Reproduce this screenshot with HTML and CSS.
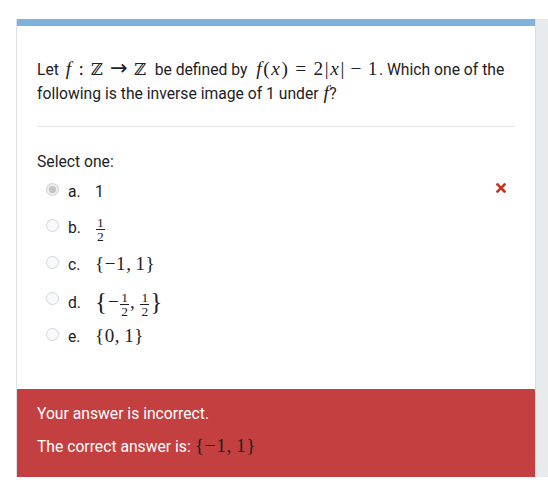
FILE: index.html
```html
<!DOCTYPE html>
<html>
<head>
<meta charset="utf-8">
<link rel="stylesheet" href="styles.css">
</head>
<body>
<div class="page">
  <div class="card">
    <div class="bar"></div>
    <div class="content">
      <div class="qtext">Let <span class="m qm qm-first"><i>f</i><span class="rel">:</span><span class="bb">ℤ</span><span class="rel arr">→</span><span class="bb">ℤ</span></span> be defined by <span class="m qm qm-mid"><i>f</i>(<i>x</i>)<span class="rel">=</span>2|<i>x</i>|<span class="bin">−</span>1</span>. Which one of the following is the inverse image of 1 under <span class="m qm qm-end"><i>f</i></span>?</div>
      <div class="sep"></div>
      <div class="prompt">Select one:</div>
      <div class="answers">
        <div class="opt">
          <span class="radio checked"></span><span class="lbl">a.</span><span class="val">1</span>
          <svg class="cross" width="10" height="10" viewBox="0 0 10 10"><path d="M1.5 1.5L8.5 8.5M8.5 1.5L1.5 8.5" stroke="#ca3120" stroke-width="2.6" stroke-linecap="square"/></svg>
        </div>
        <div class="opt">
          <span class="radio"></span><span class="lbl">b.</span><span class="val"><span class="frac"><span class="num">1</span><span class="den">2</span></span></span>
        </div>
        <div class="opt">
          <span class="radio"></span><span class="lbl">c.</span><span class="val m">{−1,<span class="sp"></span>1}</span>
        </div>
        <div class="opt">
          <span class="radio"></span><span class="lbl">d.</span><span class="val m"><span class="big">{</span>−<span class="frac"><span class="num">1</span><span class="den">2</span></span>,<span class="sp"></span><span class="frac"><span class="num">1</span><span class="den">2</span></span><span class="big">}</span></span>
        </div>
        <div class="opt">
          <span class="radio"></span><span class="lbl">e.</span><span class="val m">{0,<span class="sp"></span>1}</span>
        </div>
      </div>
    </div>
    <div class="feedback">
      <p class="fb1">Your answer is incorrect.</p>
      <p class="fb2">The correct answer is: <span class="m">{−1,<span class="sp"></span>1}</span></p>
    </div>
  </div>
  <div class="side"></div>
</div>
</body>
</html>
```
FILE: styles.css
```css
html, body {
  margin: 0;
  padding: 0;
  background: #ffffff;
}
body {
  font-family: Roboto, "Liberation Sans", sans-serif;
  font-size: 15.7px;
  color: #1d2125;
}
.page {
  display: flex;
  align-items: stretch;
  padding: 19px 0 0 16px;
}
.card {
  width: 519px;
  box-sizing: border-box;
  border-left: 1px solid #dee2e6;
  background: #fff;
  display: flex;
  flex-direction: column;
}
.bar {
  height: 7px;
  background: #7fb3dc;
}
.content {
  padding: 32px 20px 0 20px;
  height: 363px;
  box-sizing: border-box;
}
.qtext {
  line-height: 24px;
}
.m {
  font-family: "Liberation Serif", "DejaVu Serif", serif;
  font-size: 18.5px;
  line-height: 1;
  white-space: nowrap;
  letter-spacing: 0.6px;
}
.qm {
  font-size: 19.3px;
  letter-spacing: 1.5px;
}
.qm-first {
  margin: 0 3px 0 3px;
}
.qm-mid {
  margin: 0 0 0 5px;
  letter-spacing: 1.6px;
}
.qm-end {
  margin: 0 0 0 1px;
  letter-spacing: 0.5px;
}
.m i {
  font-style: italic;
}
.bb {
  font-family: "DejaVu Serif", serif;
  font-size: 16.5px;
  line-height: 1;
}
.rel {
  margin: 0 0.3em;
}
.arr {
  font-family: "DejaVu Sans", sans-serif;
  font-size: 21px;
  line-height: 1;
  margin: 0 0.25em;
}
.bin {
  margin: 0 0.24em;
}
.sp {
  display: inline-block;
  width: 4px;
}
.sep {
  height: 1px;
  background: #e6e8eb;
  margin-top: 20px;
}
.prompt {
  margin-top: 23px;
  line-height: 24px;
}
.answers {
  display: flex;
  flex-direction: column;
}
.opt {
  display: flex;
  align-items: baseline;
  height: 36.3px;
  flex: none;
  box-sizing: border-box;
  padding-top: 6px;
  line-height: 24px;
}
.radio {
  align-self: flex-start;
  flex: none;
  width: 13px;
  height: 13px;
  margin: 3px 9px 0 9px;
  border-radius: 50%;
  border: 1px solid #d3d6d9;
  background: #f8f9fa;
  box-sizing: border-box;
}
.radio.checked {
  border-color: #d0d0d0;
  background: radial-gradient(circle, #c4c4c4 0, #c4c4c4 3.3px, #ececec 4px);
}
.lbl {
  width: 27px;
  flex: none;
}
.val.m {
  font-size: 19px;
}
.frac {
  display: inline-flex;
  flex-direction: column;
  align-items: center;
  font-family: "Liberation Serif", "DejaVu Serif", serif;
  font-size: 13.5px;
  line-height: 11px;
  letter-spacing: 0;
  vertical-align: 6px;
  margin: 0 1px;
}
.frac .num {
  padding: 0 1px 1px;
  border-bottom: 1px solid #1d2125;
}
.frac .den {
  padding-top: 1px;
}
.big {
  font-size: 25px;
  letter-spacing: 0;
  vertical-align: -2px;
  margin: 0 1px 0 0;
}
.cross {
  align-self: flex-start;
  margin: 3px 9px 0 auto;
}
.feedback {
  background: #c44040;
  color: #ffffff;
  height: 88px;
  box-sizing: border-box;
  padding: 14px 20px 0 20px;
}
.feedback p {
  margin: 0;
  line-height: 22px;
}
.fb1 {
  margin-bottom: 11px !important;
}
.fb2 .m {
  color: #1d2125;
  font-size: 19.5px;
}
.side {
  width: 13px;
  box-sizing: border-box;
  border-left: 1px solid #d9dde0;
  background: #e8ebee;
}
```
